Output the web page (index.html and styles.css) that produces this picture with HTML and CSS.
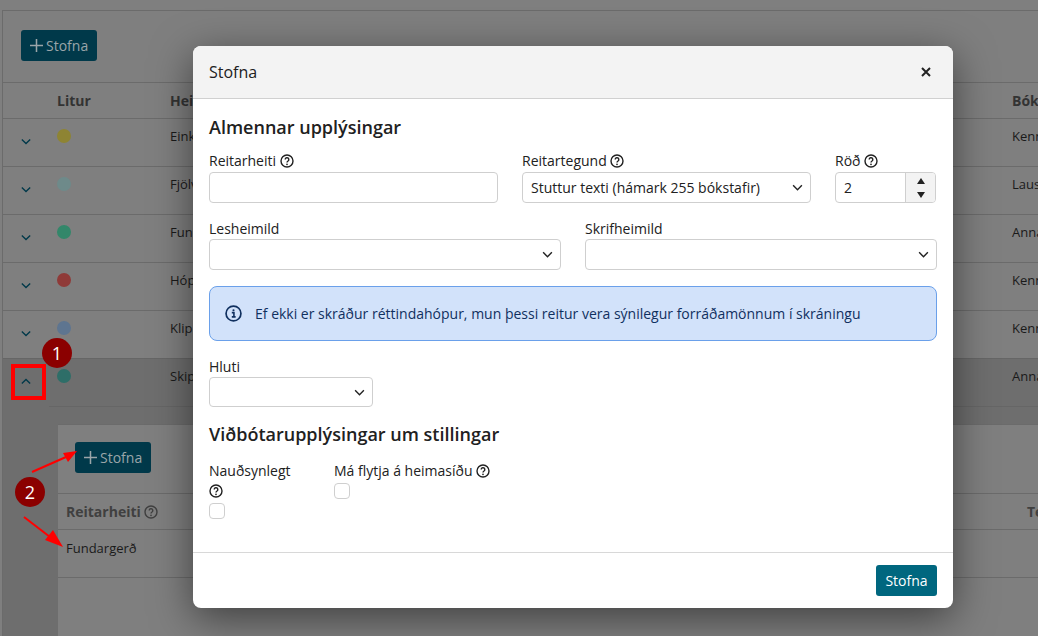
FILE: index.html
```html
<!DOCTYPE html>
<html lang="en">
<head>
    <meta charset="UTF-8">
    <meta name="viewport" content="width=device-width, initial-scale=1.0">
    <title>Stofna</title>
    <link rel="stylesheet" href="styles.css">
</head>
<body>
    <svg class="icon-defs" width="0" height="0">
        <symbol id="help" viewBox="0 0 14 14">
            <circle cx="7" cy="7" r="6" fill="none" stroke="currentColor" stroke-width="1.4"/>
            <path d="M5.2 5.5a1.8 1.8 0 1 1 2.8 1.5c-.7.4-1 .7-1 1.4" fill="none" stroke="currentColor" stroke-width="1.4"/>
            <circle cx="7" cy="10.3" r=".85" fill="currentColor"/>
        </symbol>
        <symbol id="chevron" viewBox="0 0 12 8">
            <path d="M1 1.5l5 5 5-5" fill="none" stroke="currentColor" stroke-width="1.6"/>
        </symbol>
        <symbol id="plus" viewBox="0 0 12 12">
            <path d="M6 0v12M0 6h12" fill="none" stroke="currentColor" stroke-width="1.4"/>
        </symbol>
    </svg>

    <!-- Page behind the dialog -->
    <div class="panel">
        <div class="toolbar">
            <button class="add-btn" type="button"><svg class="plus"><use href="#plus"/></svg>Stofna</button>
        </div>
        <div class="row head-row">
            <div class="cell-toggle"></div>
            <div class="cell-color">Litur</div>
            <div class="cell-name">Heiti</div>
            <div class="cell-book">Bók</div>
        </div>
        <div class="row">
            <div class="cell-toggle"><svg class="toggle"><use href="#chevron"/></svg></div>
            <div class="cell-color"><span class="dot dot-yellow"></span></div>
            <div class="cell-name">Eink</div>
            <div class="cell-book">Kenn</div>
        </div>
        <div class="row">
            <div class="cell-toggle"><svg class="toggle"><use href="#chevron"/></svg></div>
            <div class="cell-color"><span class="dot dot-pale"></span></div>
            <div class="cell-name">Fjölv</div>
            <div class="cell-book">Laus</div>
        </div>
        <div class="row">
            <div class="cell-toggle"><svg class="toggle"><use href="#chevron"/></svg></div>
            <div class="cell-color"><span class="dot dot-green"></span></div>
            <div class="cell-name">Fun</div>
            <div class="cell-book">Anna</div>
        </div>
        <div class="row">
            <div class="cell-toggle"><svg class="toggle"><use href="#chevron"/></svg></div>
            <div class="cell-color"><span class="dot dot-red"></span></div>
            <div class="cell-name">Hóp</div>
            <div class="cell-book">Kenn</div>
        </div>
        <div class="row">
            <div class="cell-toggle"><svg class="toggle"><use href="#chevron"/></svg></div>
            <div class="cell-color"><span class="dot dot-blue"></span></div>
            <div class="cell-name">Klip</div>
            <div class="cell-book">Kenn</div>
        </div>
        <div class="expanded">
            <div class="row open-row">
                <div class="cell-toggle"><svg class="toggle toggle-up"><use href="#chevron"/></svg></div>
                <div class="cell-color"><span class="dot dot-teal"></span></div>
                <div class="cell-name">Skip</div>
                <div class="cell-book">Anna</div>
            </div>
            <div class="open-line"></div>
            <div class="nested">
                <div class="toolbar nested-toolbar">
                    <button class="add-btn" type="button"><svg class="plus"><use href="#plus"/></svg>Stofna</button>
                </div>
                <div class="nested-row nested-head">
                    <div class="nested-name">Reitarheiti <svg class="help"><use href="#help"/></svg></div>
                    <div class="nested-type">Te</div>
                </div>
                <div class="nested-row nested-body">
                    <div class="nested-name">Fundargerð</div>
                </div>
            </div>
        </div>
    </div>

    <!-- Annotations on the screenshot -->
    <div class="mark-box"></div>
    <div class="mark-num mark-one">1</div>
    <div class="mark-num mark-two">2</div>
    <svg class="mark-arrows" width="100" height="120" viewBox="0 0 100 120">
        <path d="M32 32L66 17" stroke="#f00" stroke-width="2" fill="none"/>
        <path d="M77 11L63 13 68 22z" fill="#f00"/>
        <path d="M24 77L50 97" stroke="#f00" stroke-width="2" fill="none"/>
        <path d="M63 107L45 100 53 90z" fill="#f00"/>
    </svg>

    <!-- Dialog -->
    <div class="modal">
        <div class="modal-header">
            <span class="modal-title">Stofna</span>
            <svg class="close" width="10" height="10" viewBox="0 0 10 10"><path d="M1 1l8 8M9 1l-8 8" stroke="#222" stroke-width="2"/></svg>
        </div>
        <div class="modal-body">
            <h2 class="section-title">Almennar upplýsingar</h2>

            <div class="form-row">
                <div class="field field-name">
                    <label>Reitarheiti <svg class="help"><use href="#help"/></svg></label>
                    <input class="control" type="text">
                </div>
                <div class="field field-type">
                    <label>Reitartegund <svg class="help"><use href="#help"/></svg></label>
                    <div class="select-wrap">
                        <select class="control">
                            <option>Stuttur texti (hámark 255 bókstafir)</option>
                        </select>
                        <svg class="select-arrow"><use href="#chevron"/></svg>
                    </div>
                </div>
                <div class="field field-order">
                    <label>Röð <svg class="help"><use href="#help"/></svg></label>
                    <div class="number control">
                        <span class="number-value">2</span>
                        <div class="spinner">
                            <span class="spin-up"></span>
                            <span class="spin-down"></span>
                        </div>
                    </div>
                </div>
            </div>

            <div class="form-row">
                <div class="field field-half">
                    <label>Lesheimild</label>
                    <div class="select-wrap">
                        <select class="control"><option></option></select>
                        <svg class="select-arrow"><use href="#chevron"/></svg>
                    </div>
                </div>
                <div class="field field-half">
                    <label>Skrifheimild</label>
                    <div class="select-wrap">
                        <select class="control"><option></option></select>
                        <svg class="select-arrow"><use href="#chevron"/></svg>
                    </div>
                </div>
            </div>

            <div class="alert">
                <svg class="alert-icon" width="17" height="17" viewBox="0 0 16 16">
                    <circle cx="8" cy="8" r="7" fill="none" stroke="currentColor" stroke-width="1.6"/>
                    <circle cx="8" cy="4.9" r="1" fill="currentColor"/>
                    <path d="M6.4 7.2H8.4V11M6.4 11.2H10" fill="none" stroke="currentColor" stroke-width="1.5"/>
                </svg>
                <span>Ef ekki er skráður réttindahópur, mun þessi reitur vera sýnilegur forráðamönnum í skráningu</span>
            </div>

            <div class="field field-part">
                <label>Hluti</label>
                <div class="select-wrap">
                    <select class="control control-short"><option></option></select>
                    <svg class="select-arrow"><use href="#chevron"/></svg>
                </div>
            </div>

            <h2 class="section-title section-second">Viðbótarupplýsingar um stillingar</h2>

            <div class="checks">
                <div class="check check-required">
                    <label>Nauðsynlegt <svg class="help"><use href="#help"/></svg></label>
                    <span class="checkbox"></span>
                </div>
                <div class="check">
                    <label>Má flytja á heimasíðu <svg class="help"><use href="#help"/></svg></label>
                    <span class="checkbox"></span>
                </div>
            </div>
        </div>
        <div class="modal-footer">
            <button class="submit-btn" type="button">Stofna</button>
        </div>
    </div>
</body>
</html>
```

FILE: styles.css
```css
/* General body styling */
html, body {
    height: 100%;
}

body {
    font-family: 'Open Sans', sans-serif;
    font-size: 14px;
    line-height: 20px;
    margin: 0;
    padding: 10px 0 0 2px;
    box-sizing: border-box;
    background-color: #7f7f7f;
    color: #1a1a1a;
    overflow: hidden;
}

.icon-defs {
    position: absolute;
}

.help {
    width: 14px;
    height: 14px;
    vertical-align: -2px;
}

/* Page behind the dialog */
.panel {
    display: flex;
    flex-direction: column;
    height: 100%;
    border-top: 1px solid #6b6b6b;
    border-left: 1px solid #6b6b6b;
    overflow: hidden;
}

.toolbar {
    flex-shrink: 0;
    padding: 19px 18px 21px;
    height: 31px;
}

.add-btn {
    display: flex;
    align-items: center;
    gap: 3px;
    height: 31px;
    width: 76px;
    padding: 0 0 0 9px;
    border: none;
    border-radius: 3px;
    background-color: #00394a;
    color: #9aa5a9;
    font-family: inherit;
    font-size: 14px;
}

.plus {
    width: 13px;
    height: 13px;
}

.row {
    display: flex;
    flex-shrink: 0;
    height: 47px;
    border-top: 1px solid #6b6b6b;
    font-size: 13px;
}

.head-row {
    height: 35px;
    font-size: 14px;
    font-weight: 700;
    color: #333;
    align-items: center;
}

.cell-toggle {
    width: 54px;
    flex-shrink: 0;
    padding-left: 18px;
    box-sizing: border-box;
}

.cell-color {
    width: 113px;
    flex-shrink: 0;
}

.cell-name {
    width: 842px;
    flex-shrink: 0;
    padding-top: 7px;
}

.cell-book {
    padding-top: 7px;
    white-space: nowrap;
}

.head-row .cell-name,
.head-row .cell-book {
    padding-top: 0;
}

.toggle {
    display: block;
    width: 10px;
    height: 7px;
    margin-top: 19px;
    color: #00394a;
}

.toggle-up {
    transform: rotate(180deg);
}

.dot {
    display: block;
    width: 14px;
    height: 14px;
    margin-top: 10px;
    border-radius: 50%;
}

.dot-yellow { background-color: #8e8433; }
.dot-pale { background-color: #6e8a8a; }
.dot-green { background-color: #33876a; }
.dot-red { background-color: #8f3a38; }
.dot-blue { background-color: #5e7590; }
.dot-teal { background-color: #2e6e68; }

/* Expanded row with nested table */
.expanded {
    flex: 1;
    min-height: 0;
    display: flex;
    flex-direction: column;
    background-color: #6e6e6e;
}

.expanded .row {
    border-top: 1px solid #666;
}

.open-line {
    flex-shrink: 0;
    height: 1px;
    margin-left: 46px;
    background-color: #666;
}

.nested {
    flex: 1;
    margin: 17px 0 0 55px;
    background-color: #7f7f7f;
    border-top: 1px solid #6b6b6b;
}

.nested-toolbar {
    padding: 17px 17px 20px;
}

.nested-row {
    display: flex;
    border-top: 1px solid #6b6b6b;
    padding-left: 8px;
}

.nested-head {
    height: 35px;
    align-items: center;
    font-weight: 700;
    color: #404040;
}

.nested-body {
    height: 39px;
    padding-top: 8px;
    border-bottom: 1px solid #6b6b6b;
    font-size: 13px;
}

.nested-name {
    width: 961px;
    flex-shrink: 0;
}

/* Annotations */
.mark-box {
    position: absolute;
    left: 11px;
    top: 364px;
    width: 27px;
    height: 28px;
    border: 4px solid #f00;
}

.mark-num {
    position: absolute;
    width: 30px;
    height: 30px;
    border-radius: 50%;
    background-color: #8b0000;
    color: #fff;
    font-size: 18px;
    line-height: 30px;
    text-align: center;
}

.mark-one {
    left: 42px;
    top: 338px;
}

.mark-two {
    left: 15px;
    top: 477px;
}

.mark-arrows {
    position: absolute;
    left: 0;
    top: 440px;
}

/* Dialog */
.modal {
    position: absolute;
    left: 193px;
    top: 46px;
    width: 760px;
    height: 562px;
    display: flex;
    flex-direction: column;
    background-color: white;
    border-radius: 8px;
    box-shadow: 0 10px 40px rgba(0, 0, 0, 0.5);
    color: #212121;
}

.modal-header {
    display: flex;
    flex-shrink: 0;
    align-items: center;
    justify-content: space-between;
    height: 53px;
    padding: 0 22px 0 16px;
    box-sizing: border-box;
    background-color: #f3f3f3;
    border-bottom: 1px solid #d0d0d0;
    border-radius: 8px 8px 0 0;
}

.modal-title {
    font-size: 16px;
}

.modal-body {
    flex: 1;
    padding: 16px 16px 0;
}

.section-title {
    font-size: 18px;
    font-weight: 600;
    line-height: 24px;
    margin: 0 0 12px;
}

.section-second {
    margin: 15px 0 15px;
}

.form-row {
    display: flex;
    gap: 24px;
    margin-bottom: 15px;
}

.field label {
    display: block;
    height: 21px;
    white-space: nowrap;
}

.field-name, .field-type {
    width: 289px;
}

.field-order {
    width: 101px;
}

.field-half {
    width: 352px;
}

.field-half label {
    height: 20px;
    padding-top: 1px;
}

.field-part {
    width: 164px;
}

.field-part label {
    height: 20px;
}

.control {
    display: block;
    width: 100%;
    height: 31px;
    box-sizing: border-box;
    border: 1px solid #cfcfcf;
    border-radius: 4px;
    background-color: white;
    padding: 0 8px;
    font-family: inherit;
    font-size: 14px;
    color: #212121;
    appearance: none;
}

.control-short {
    height: 30px;
}

.select-wrap {
    position: relative;
}

.select-arrow {
    position: absolute;
    right: 8px;
    top: 12px;
    width: 11px;
    height: 7px;
    color: #222;
    pointer-events: none;
}

.number {
    display: flex;
    align-items: center;
    justify-content: space-between;
    padding: 0;
    overflow: hidden;
}

.number-value {
    padding-left: 8px;
}

.spinner {
    display: flex;
    flex-direction: column;
    align-items: center;
    justify-content: center;
    gap: 8px;
    width: 29px;
    height: 100%;
    background-color: #f3f3f3;
    border-left: 1px solid #cfcfcf;
}

.spin-up {
    border-left: 4px solid transparent;
    border-right: 4px solid transparent;
    border-bottom: 6px solid #222;
}

.spin-down {
    border-left: 4px solid transparent;
    border-right: 4px solid transparent;
    border-top: 6px solid #222;
}

.alert {
    display: flex;
    align-items: center;
    gap: 13px;
    height: 55px;
    box-sizing: border-box;
    padding: 0 15px;
    margin: 16px 0;
    background-color: #d2e2fa;
    border: 1px solid #6aa0ea;
    border-radius: 8px;
    color: #10305f;
}

.alert-icon {
    flex-shrink: 0;
}

.checks {
    display: flex;
    gap: 43px;
}

.check label {
    display: block;
}

.check-required {
    width: 82px;
}

.checkbox {
    display: block;
    width: 16px;
    height: 16px;
    box-sizing: border-box;
    margin-top: 2px;
    border: 1px solid #cfcfcf;
    border-radius: 4px;
}

.modal-footer {
    display: flex;
    flex-shrink: 0;
    justify-content: flex-end;
    align-items: center;
    height: 56px;
    box-sizing: border-box;
    padding: 0 16px;
    border-top: 1px solid #d8d8d8;
}

.submit-btn {
    height: 31px;
    width: 61px;
    border: none;
    border-radius: 3px;
    background-color: #00677f;
    color: white;
    font-family: inherit;
    font-size: 14px;
}
```
